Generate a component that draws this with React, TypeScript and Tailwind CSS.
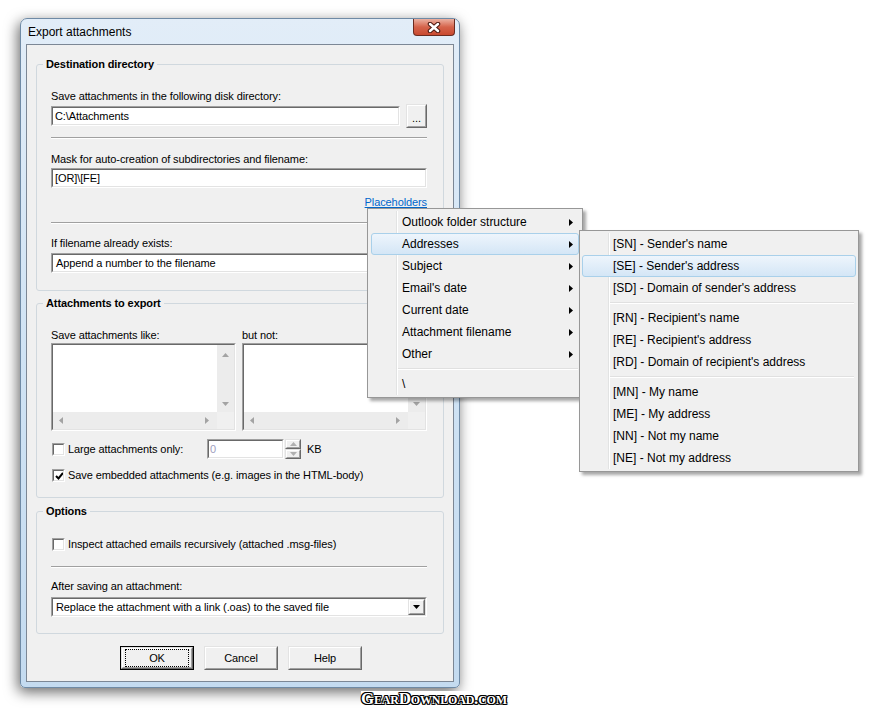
import React from 'react'

type Dir = 'up' | 'down' | 'left' | 'right'

function Tri({ dir, color = '#a3a3a3' }: { dir: Dir; color?: string }) {
  const vert = dir === 'up' || dir === 'down'
  const pts = { up: '0,4 7,4 3.5,0', down: '0,0 7,0 3.5,4', left: '4,0 4,7 0,3.5', right: '0,0 0,7 4,3.5' }[dir]
  return (
    <svg width={vert ? 7 : 4} height={vert ? 4 : 7} viewBox={vert ? '0 0 7 4' : '0 0 4 7'} className="block">
      <polygon points={pts} fill={color} />
    </svg>
  )
}

function Sunken({ className = '', children }: { className?: string; children?: React.ReactNode }) {
  return (
    <div className={`border border-[#a0a0a0] border-r-white border-b-white ${className}`}>
      <div className="h-full border border-[#696969] border-r-[#e3e3e3] border-b-[#e3e3e3] bg-white overflow-hidden">
        {children}
      </div>
    </div>
  )
}

function Raised({ className = '', children }: { className?: string; children?: React.ReactNode }) {
  return (
    <div className={`border border-[#e3e3e3] border-r-[#696969] border-b-[#696969] ${className}`}>
      <div className="h-full border border-white border-r-[#a0a0a0] border-b-[#a0a0a0] bg-[#f0f0f0] flex items-center justify-center">
        {children}
      </div>
    </div>
  )
}

function Sep() {
  return <div className="h-[2px] border-t border-[#a0a0a0] border-b border-b-white" />
}

function Label({ children }: { children: React.ReactNode }) {
  return <div className="h-[13px] leading-[13px] whitespace-nowrap">{children}</div>
}

function Field({ value, className = '' }: { value: string; className?: string }) {
  return (
    <Sunken className={`h-[20px] ${className}`}>
      <div className="pl-[2px] leading-[16px] whitespace-nowrap">{value}</div>
    </Sunken>
  )
}

function Combo({ value }: { value: string }) {
  return (
    <Sunken className="h-[20px]">
      <div className="flex h-full items-center">
        <div className="flex-1 pl-[3px] leading-[16px] whitespace-nowrap">{value}</div>
        <Raised className="w-[17px] h-[16px] mr-0">
          <Tri dir="down" color="#000" />
        </Raised>
      </div>
    </Sunken>
  )
}

function Check({ checked }: { checked?: boolean }) {
  return (
    <Sunken className="w-[13px] h-[13px] shrink-0">
      {checked && (
        <svg width="9" height="9" viewBox="0 0 9 9" className="block ml-[1px] mt-[1px]">
          <polyline points="1,4 3.5,6.5 8,1" fill="none" stroke="#000" strokeWidth="2" />
        </svg>
      )}
    </Sunken>
  )
}

function ListBox() {
  return (
    <Sunken className="h-[88px]">
      <div className="flex h-full flex-col">
        <div className="flex flex-1">
          <div className="flex-1" />
          <div className="w-[17px] bg-[#ececec] flex flex-col items-center justify-between pt-[8px] pb-[6px]">
            <Tri dir="up" />
            <Tri dir="down" />
          </div>
        </div>
        <div className="flex h-[17px]">
          <div className="flex-1 bg-[#ececec] flex items-center justify-between pl-[6px] pr-[8px]">
            <Tri dir="left" />
            <Tri dir="right" />
          </div>
          <div className="w-[17px] bg-[#f0f0f0]" />
        </div>
      </div>
    </Sunken>
  )
}

function Group({ title, className = '', children }: { title: string; className?: string; children: React.ReactNode }) {
  return (
    <div className={`relative border border-[#d0d8de] rounded-[3px] pl-[14px] pr-[16px] ${className}`}>
      <span className="absolute left-[6px] -top-[8px] bg-[#f0f0f0] px-[3px] font-bold leading-[14px]">{title}</span>
      {children}
    </div>
  )
}

function Btn({ label, def }: { label: string; def?: boolean }) {
  if (def) {
    return (
      <div className="w-[74px] h-[24px] border border-black">
        <Raised className="h-full">
          <div className="w-full h-full m-[2px] border border-dotted border-black flex items-center justify-center">{label}</div>
        </Raised>
      </div>
    )
  }
  return <Raised className="w-[74px] h-[24px]">{label}</Raised>
}

function Window() {
  return (
    <div className="ml-[20px] mt-[18px] w-[440px] rounded-t-[7px] rounded-b-[5px] border border-[#6f8aa5] bg-linear-to-b from-[#e2edf8] via-[#d0e3f4] to-[#c4dbf0] px-[5px] pb-[5px] shadow-[-2px_4px_14px_rgba(0,0,0,0.6)]">
      <div className="h-[25px] flex justify-between">
        <span className="self-center pl-[2px] text-[12px] leading-[14px]">Export attachments</span>
        <div className="-mr-[1px] w-[42px] h-[17px] rounded-b-[4px] border border-t-0 border-[#6a2b20] bg-linear-to-b from-[#eab1a2] via-[#d5634b] to-[#c9492f] flex items-center justify-center">
          <svg width="14" height="11" viewBox="0 0 14 11">
            <path d="M3 2 L11 9 M11 2 L3 9" stroke="#4a1810" strokeWidth="4.5" strokeLinecap="round" />
            <path d="M3 2 L11 9 M11 2 L3 9" stroke="#fff" strokeWidth="2.5" strokeLinecap="round" />
          </svg>
        </div>
      </div>
      <div className="h-[638px] border border-[#7c8795] bg-[#f0f0f0] px-[9px] pt-[19px] text-[11px] tracking-[-0.1px]">
        <Group title="Destination directory" className="pt-[25px] pb-[17px]">
          <Label>Save attachments in the following disk directory:</Label>
          <div className="mt-[1px] flex h-[24px] items-center gap-[6px]">
            <Field value="C:\Attachments" className="flex-1" />
            <Raised className="w-[21px] h-[24px]">
              <span className="leading-[10px] pt-[4px]">...</span>
            </Raised>
          </div>
          <div className="mt-[9px]"><Sep /></div>
          <div className="mt-[14px]"><Label>Mask for auto-creation of subdirectories and filename:</Label></div>
          <Field value="[OR]\[FE]" className="mt-[2px]" />
          <div className="mt-[8px] h-[13px] leading-[13px] text-right">
            <span className="text-[#0066cc] underline">Placeholders</span>
          </div>
          <div className="mt-[13px]"><Sep /></div>
          <div className="mt-[13px]"><Label>If filename already exists:</Label></div>
          <div className="mt-[3px]"><Combo value="Append a number to the filename" /></div>
        </Group>

        <Group title="Attachments to export" className="mt-[12px] pt-[25px] pb-[14px]">
          <div className="grid grid-cols-2 gap-x-[6px]">
            <Label>Save attachments like:</Label>
            <Label>but not:</Label>
            <div className="mt-[1px]"><ListBox /></div>
            <div className="mt-[1px]"><ListBox /></div>
          </div>
          <div className="mt-[8px] flex h-[20px] items-center">
            <div className="ml-[1px]"><Check /></div>
            <span className="ml-[3px] w-[139px]">Large attachments only:</span>
            <Sunken className="w-[77px] h-[20px]">
              <div className="pl-[1px] leading-[16px] text-[#a0a0c0]">0</div>
            </Sunken>
            <div className="ml-[1px] flex flex-col">
              <Raised className="w-[16px] h-[10px]"><Tri dir="up" color="#b0b0b0" /></Raised>
              <Raised className="w-[16px] h-[10px]"><Tri dir="down" color="#b0b0b0" /></Raised>
            </div>
            <span className="ml-[6px]">KB</span>
          </div>
          <div className="mt-[8px] flex h-[16px] items-center">
            <div className="ml-[1px]"><Check checked /></div>
            <span className="ml-[3px]">Save embedded attachments (e.g. images in the HTML-body)</span>
          </div>
        </Group>

        <Group title="Options" className="mt-[13px] pt-[24px] pb-[16px]">
          <div className="flex h-[16px] items-center">
            <div className="ml-[1px]"><Check /></div>
            <span className="ml-[3px]">Inspect attached emails recursively (attached .msg-files)</span>
          </div>
          <div className="mt-[14px]"><Sep /></div>
          <div className="mt-[12px]"><Label>After saving an attachment:</Label></div>
          <div className="mt-[4px]"><Combo value="Replace the attachment with a link (.oas) to the saved file" /></div>
        </Group>

        <div className="mt-[12px] flex gap-[10px] pl-[84px]">
          <Btn label="OK" def />
          <Btn label="Cancel" />
          <Btn label="Help" />
        </div>
      </div>
    </div>
  )
}

function Arrow() {
  return (
    <svg width="4" height="7" viewBox="0 0 4 7" className="block">
      <polygon points="0,0 0,7 4,3.5" fill="#000" />
    </svg>
  )
}

function MenuItem({ label, hl, arrow }: { label: string; hl?: boolean; arrow?: boolean }) {
  return (
    <div
      className={`relative h-[22px] flex items-center justify-between rounded-[3px] border pl-[30px] pr-[5px] whitespace-nowrap ${
        hl ? 'border-[#a9d0ea] bg-linear-to-b from-[#eef5fc] to-[#d4e6f6]' : 'border-transparent'
      }`}
    >
      <span>{label}</span>
      {arrow && <Arrow />}
    </div>
  )
}

function MenuSep() {
  return (
    <div className="h-[8px] flex items-center pl-[28px] pr-[2px]">
      <div className="h-[2px] flex-1 border-t border-[#e0e0e0] border-b border-b-white" />
    </div>
  )
}

function Menu({ className, children }: { className: string; children: React.ReactNode }) {
  return (
    <div className={`absolute border border-[#979797] bg-[#f0f0f0] p-[2px] text-[12px] shadow-[3px_3px_3px_rgba(0,0,0,0.35)] ${className}`}>
      <div className="relative">
        <div className="absolute left-[26px] top-0 bottom-0 w-[2px] border-l border-[#e2e3e3] border-r border-r-white" />
        {children}
      </div>
    </div>
  )
}

const mainItems = ['Outlook folder structure', 'Addresses', 'Subject', "Email's date", 'Current date', 'Attachment filename', 'Other']

export default function App() {
  return (
    <div className="relative w-[870px] h-[710px] overflow-hidden bg-white text-black font-['Liberation_Sans',Arial,sans-serif]">
      <Window />
      <div className="ml-[361px] mt-[3px] w-[152px] bg-white text-[17px] leading-[16px] tracking-[-0.2px] font-bold text-white font-['Liberation_Serif',serif] [font-variant:small-caps] [text-shadow:1px_0_0_#000,-1px_0_0_#000,0_1px_0_#000,0_-1px_0_#000,1px_1px_0_#000,-1px_-1px_0_#000,1px_-1px_0_#000,-1px_1px_0_#000]">
        GearDownload.com
      </div>

      <Menu className="left-[367px] top-[208px] w-[216px]">
        <div className="mx-[1px]">
          {mainItems.map(l => (
            <MenuItem key={l} label={l} arrow hl={l === 'Addresses'} />
          ))}
        </div>
        <MenuSep />
        <div className="mx-[1px]">
          <MenuItem label="\" />
        </div>
      </Menu>

      <Menu className="left-[579px] top-[230px] w-[280px]">
        <MenuItem label="[SN] - Sender's name" />
        <MenuItem label="[SE] - Sender's address" hl />
        <MenuItem label="[SD] - Domain of sender's address" />
        <MenuSep />
        <MenuItem label="[RN] - Recipient's name" />
        <MenuItem label="[RE] - Recipient's address" />
        <MenuItem label="[RD] - Domain of recipient's address" />
        <MenuSep />
        <MenuItem label="[MN] - My name" />
        <MenuItem label="[ME] - My address" />
        <MenuItem label="[NN] - Not my name" />
        <MenuItem label="[NE] - Not my address" />
      </Menu>
    </div>
  )
}
